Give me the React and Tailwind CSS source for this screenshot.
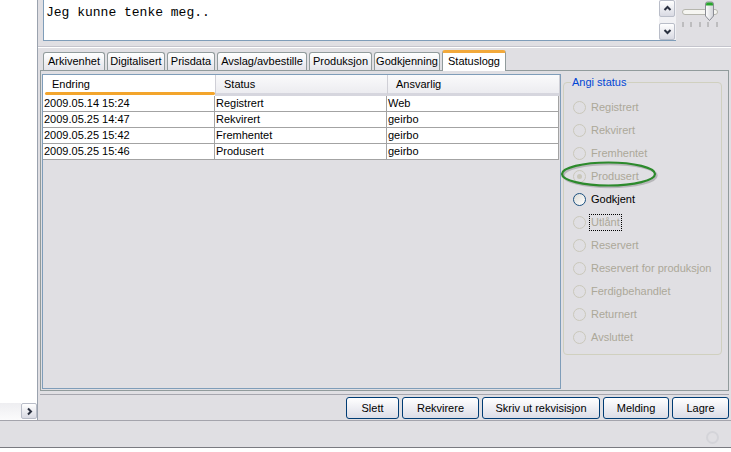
import React from 'react'

const TABS = [
  { label: 'Arkivenhet', w: 'w-[62px]' },
  { label: 'Digitalisert', w: 'w-[58px]' },
  { label: 'Prisdata', w: 'w-[48px]' },
  { label: 'Avslag/avbestille', w: 'w-[90px]' },
  { label: 'Produksjon', w: 'w-[63px]' },
  { label: 'Godkjenning', w: 'w-[66px]' },
]

const ROWS = [
  ['2009.05.14 15:24', 'Registrert', 'Web'],
  ['2009.05.25 14:47', 'Rekvirert', 'geirbo'],
  ['2009.05.25 15:42', 'Fremhentet', 'geirbo'],
  ['2009.05.25 15:46', 'Produsert', 'geirbo'],
]

const RADIOS = [
  { label: 'Registrert', state: 'off' },
  { label: 'Rekvirert', state: 'off' },
  { label: 'Fremhentet', state: 'off' },
  { label: 'Produsert', state: 'checked' },
  { label: 'Godkjent', state: 'enabled' },
  { label: 'Utlånt', state: 'focus' },
  { label: 'Reservert', state: 'off' },
  { label: 'Reservert for produksjon', state: 'off' },
  { label: 'Ferdigbehandlet', state: 'off' },
  { label: 'Returnert', state: 'off' },
  { label: 'Avsluttet', state: 'off' },
]

const BUTTONS = [
  { label: 'Slett', w: 'w-[53px]' },
  { label: 'Rekvirere', w: 'w-[77px]' },
  { label: 'Skriv ut rekvisisjon', w: 'w-[118px]' },
  { label: 'Melding', w: 'w-[66px]' },
  { label: 'Lagre', w: 'w-[57px]' },
]

function Chevron({ dir }) {
  const d = {
    up: 'M1.5 6 L4.5 3 L7.5 6',
    down: 'M1.5 3 L4.5 6 L7.5 3',
    right: 'M3 1.5 L6 4.5 L3 7.5',
  }[dir]
  return (
    <svg width="9" height="9" viewBox="0 0 9 9">
      <path d={d} fill="none" stroke="#2b3140" strokeWidth="2" />
    </svg>
  )
}

function ScrollBtn({ dir, className }) {
  return (
    <div
      className={`flex items-center justify-center rounded-[2px] border border-[#b9bdc8] bg-gradient-to-b from-white to-[#d9dae3] ${className}`}
    >
      <Chevron dir={dir} />
    </div>
  )
}

function Slider() {
  return (
    <svg width="54" height="40" viewBox="0 0 54 40" className="shrink-0">
      <rect x="6.5" y="9.5" width="35" height="5" rx="2.5" fill="#f6f6f2" stroke="#b6b6ae" />
      {[7, 15, 24, 32, 41].map(x => (
        <line key={x} x1={x} y1="22" x2={x} y2="27" stroke="#9a9a9a" />
      ))}
      <defs>
        <linearGradient id="th" x1="0" x2="1" y1="0" y2="0">
          <stop offset="0" stopColor="#ffffff" />
          <stop offset="1" stopColor="#cfd0d6" />
        </linearGradient>
      </defs>
      <path d="M29.5 4 Q29.5 2 31.5 2 H35.5 Q37.5 2 37.5 4 V16 L33.5 20.5 L29.5 16 Z" fill="url(#th)" stroke="#8a8c94" />
      <path d="M30 4.5 Q30 2.5 31.5 2.5 H35.5 Q37 2.5 37 4.5 V5.5 H30 Z" fill="#27a52b" />
    </svg>
  )
}

function Radio({ label, state }) {
  const disabled = state === 'off' || state === 'checked' || state === 'focus'
  return (
    <div className="h-[23px] flex items-center gap-[5px]">
      <div
        className={
          state === 'enabled'
            ? 'w-[13px] h-[13px] rounded-full border border-[#1c5180] bg-gradient-to-br from-[#dcdcd7] to-white flex items-center justify-center'
            : 'w-[13px] h-[13px] rounded-full border border-[#cac8bb] flex items-center justify-center'
        }
      >
        {state === 'checked' && <div className="w-[5px] h-[5px] rounded-full bg-[#cac8bb]" />}
      </div>
      {state === 'focus' ? (
        <span className="ml-[-2px] px-[1px] py-[1px] border border-dotted border-black text-[#aca899]">{label}</span>
      ) : (
        <span className={disabled ? 'text-[#aca899]' : 'text-black'}>{label}</span>
      )}
    </div>
  )
}

export default function App() {
  return (
    <div className="w-[731px] h-[452px] bg-[#e0dfe3] flex flex-col overflow-hidden font-['Liberation_Sans',Arial,sans-serif] text-[11px] leading-[13px] text-black">
      <div className="flex h-[420px]">
        {/* venstre panel */}
        <div className="w-[38px] flex flex-col border-r border-[#9aa2ae]">
          <div className="flex-1 bg-white" />
          <div className="h-[17px] flex bg-white">
            <div className="flex-1 bg-gradient-to-b from-[#eeeef1] to-[#fbfbfc]" />
            <ScrollBtn dir="right" className="w-[16px] h-[16px]" />
          </div>
        </div>

        {/* hovedområde */}
        <div className="flex-1 flex flex-col">
          {/* tekstfelt */}
          <div className="h-[41px] flex">
            <div className="ml-[5px] w-[633px] flex border-l border-b border-[#7f9db9] bg-white">
              <div className="flex-1 pl-[2px] pt-[5px] font-['Liberation_Mono','Courier_New',monospace] text-[13px] leading-[15px]">
                Jeg kunne tenke meg..
              </div>
              <div className="w-[17px] flex flex-col bg-[#f1f1f4]">
                <ScrollBtn dir="up" className="w-[16px] h-[17px]" />
                <div className="flex-1" />
                <ScrollBtn dir="down" className="w-[16px] h-[17px]" />
              </div>
            </div>
            <Slider />
          </div>

          <div className="mt-[5px] h-[2px] border-t border-[#c4c4cc] bg-white" />

          {/* faner */}
          <div className="h-[22px] flex items-end gap-[2px] pl-[5px]">
            {TABS.map(t => (
              <div
                key={t.label}
                className={`${t.w} h-[18px] flex items-center justify-center rounded-t-[3px] border border-b-0 border-[#919b9c] bg-gradient-to-b from-white to-[#e4e4ea]`}
              >
                {t.label}
              </div>
            ))}
            <div className="relative z-10 mb-[-1px] w-[64px] h-[21px] flex items-center justify-center pb-[2px] rounded-t-[3px] border-x border-[#919b9c] border-t-[3px] border-t-[#f2a93b] bg-white">
              Statuslogg
            </div>
          </div>

          {/* faneinnhold */}
          <div className="ml-[2px] w-[689px] h-[321px] border border-[#919b9c] flex">
            {/* tabell */}
            <div className="mt-[3px] ml-[1px] w-[519px] h-[315px] border border-[#7f9db9] flex flex-col">
              <div className="flex h-[21px]">
                <div className="relative w-[172px] bg-white pl-[9px] pb-[2px] flex items-center">
                  Endring
                  <div className="absolute left-[2px] right-0 bottom-[1px] h-[3px] rounded-full bg-[#f3a52c]" />
                </div>
                <div className="w-[172px] border-l border-[#cfcfd6] border-b-[3px] border-b-[#d6d6de] bg-gradient-to-b from-[#fafafb] to-[#ececf0] pl-[8px] flex items-center">
                  Status
                </div>
                <div className="w-[172px] border-l border-[#cfcfd6] border-b-[3px] border-b-[#d6d6de] bg-gradient-to-b from-[#fafafb] to-[#ececf0] pl-[8px] flex items-center">
                  Ansvarlig
                </div>
                <div className="flex-1 border-l border-[#cfcfd6] bg-[#ececf0]" />
              </div>
              {ROWS.map(r => (
                <div key={r[0]} className="flex h-[16px]">
                  {r.map((c, i) => (
                    <div key={i} className="w-[172px] bg-white border-r border-b border-[#a3a3a3] pl-[1px] flex items-center">
                      {c}
                    </div>
                  ))}
                </div>
              ))}
            </div>

            {/* statusvalg */}
            <div className="flex-1">
              <div className="relative ml-[2px] mt-[11px] w-[159px] h-[273px] border border-[#d0d0bf] rounded-[4px] pl-[9px] pt-[13px]">
                <span className="absolute top-[-7px] left-[7px] px-[1px] bg-[#e0dfe3] text-[#0046d5]">Angi status</span>
                {RADIOS.map(r => (
                  <Radio key={r.label} label={r.label} state={r.state} />
                ))}
                <svg className="absolute left-[-6px] top-[76px]" width="104" height="32" viewBox="0 0 104 32">
                  <ellipse cx="52" cy="16.5" rx="46.5" ry="11.5" fill="none" stroke="rgba(0,0,0,0.18)" strokeWidth="2.5" />
                  <ellipse cx="50.5" cy="15" rx="46.5" ry="11.5" fill="none" stroke="#2c8a2c" strokeWidth="2.2" />
                </svg>
              </div>
            </div>
          </div>

          <div className="ml-[2px] mt-[3px] w-[689px] h-px bg-[#a6a6ae]" />

          {/* knapper */}
          <div className="ml-[2px] mt-[2px] w-[689px] h-[22px] flex justify-end gap-[3px]">
            {BUTTONS.map(b => (
              <div
                key={b.label}
                className={`${b.w} h-[22px] flex items-center justify-center rounded-[3px] border border-[#003c74] bg-gradient-to-b from-white to-[#dcdde7]`}
              >
                {b.label}
              </div>
            ))}
          </div>
        </div>
      </div>

      {/* statuslinje */}
      <div className="h-[32px] flex flex-col border-t border-[#a4a4ac]">
        <div className="h-[26px] flex justify-end items-start pt-[10px] pr-[12px]">
          <div className="w-[13px] h-[13px] rounded-full border-2 border-[#d4d4d9]" />
        </div>
        <div className="flex-1 border-t border-[#7a7a80] bg-white" />
      </div>
    </div>
  )
}
